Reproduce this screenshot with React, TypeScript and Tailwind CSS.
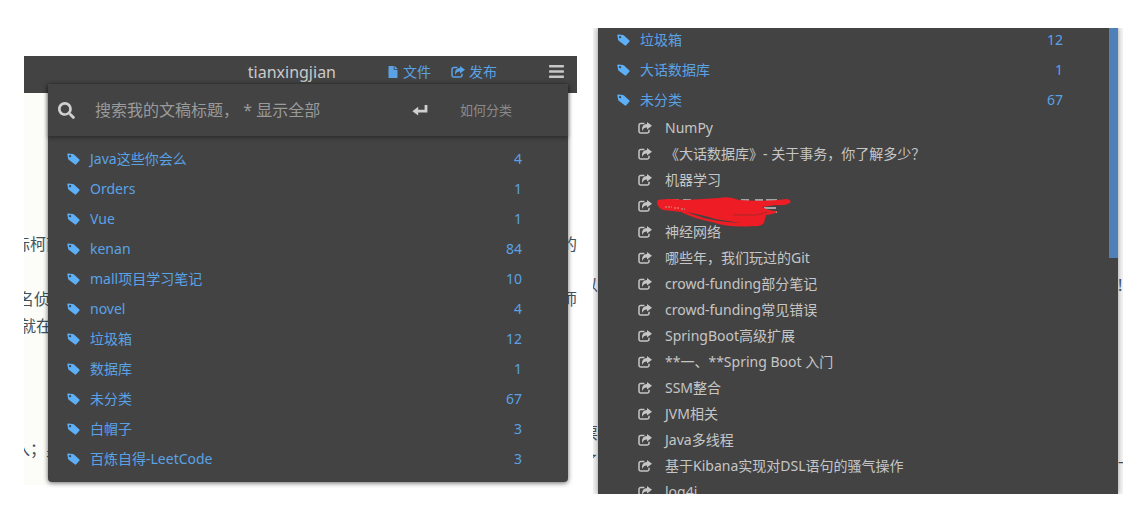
import { FaBars, FaFile, FaSearch } from "react-icons/fa";

const folders = [
  { name: "Java这些你会么", count: 4 },
  { name: "Orders", count: 1 },
  { name: "Vue", count: 1 },
  { name: "kenan", count: 84 },
  { name: "mall项目学习笔记", count: 10 },
  { name: "novel", count: 4 },
  { name: "垃圾箱", count: 12 },
  { name: "数据库", count: 1 },
  { name: "未分类", count: 67 },
  { name: "白帽子", count: 3 },
  { name: "百炼自得-LeetCode", count: 3 },
];

const expanded = [
  { name: "垃圾箱", count: 12 },
  { name: "大话数据库", count: 1 },
  { name: "未分类", count: 67 },
];

const articles = [
  "NumPy",
  "《大话数据库》- 关于事务，你了解多少？",
  "机器学习",
  "",
  "神经网络",
  "哪些年，我们玩过的Git",
  "crowd-funding部分笔记",
  "crowd-funding常见错误",
  "SpringBoot高级扩展",
  "**一、**Spring Boot 入门",
  "SSM整合",
  "JVM相关",
  "Java多线程",
  "基于Kibana实现对DSL语句的骚气操作",
  "log4j",
];

function TagIcon({ className }: { className?: string }) {
  return (
    <svg viewBox="0 0 13 12" className={className} aria-hidden="true">
      <path
        fillRule="evenodd"
        d="M.3 1.300Q.3.5 1.100.5L5.800.9Q6.500 1 7 1.400L12.400 6.400Q13 7 12.500 7.600L9.200 11.300Q8.600 11.900 8 11.400L1.700 6.800Q1.200 6.400 1.100 5.800zM3.100 2.100a1.100 1.100 0 1 0 0 2.200 1.100 1.100 0 0 0 0-2.200z"
        fill="currentColor"
      />
    </svg>
  );
}

function ShareIcon({ className }: { className?: string }) {
  return (
    <svg viewBox="0 0 14 12" className={className} fill="none" aria-hidden="true">
      <path
        d="M6.400 1.500H2.800A1.800 1.800 0 0 0 1 3.300v5.900A1.800 1.800 0 0 0 2.800 11h6.400A1.800 1.800 0 0 0 11 9.200V7.800"
        stroke="currentColor"
        strokeWidth="1.500"
      />
      <path d="M9 0 14 3.800 9 7.600V5.500C6.800 5.300 5.300 6.300 4.300 8.900 3.300 4.800 5.600 2.200 9 2.100z" fill="currentColor" />
    </svg>
  );
}

function ReturnIcon({ className }: { className?: string }) {
  return (
    <svg viewBox="0 0 16 12" className={className} fill="currentColor" aria-hidden="true">
      <path d="M12.600 1h2.800v7.600H6.200V11.600L.4 7.200 6.200 2.800v3h6.400z" />
    </svg>
  );
}

// Red marker strokes hiding a title
function Scribble() {
  return (
    <svg viewBox="0 0 134 42" className="-ml-2 h-[42px] w-[134px] shrink-0" role="img" aria-label="hidden title">
      <path d="M10 15h12m4 0h8M84 15h8M98 15h8m3 0h11M97 18h23M107 23h12m-11 4h12" stroke="#c6c6c6" strokeWidth="1.500" />
      <path
        d="M1 15Q12 13 28 15 48 14 62 13 72 11 82 15 106 17 130 14 135 15 133 18 128 21 119 20L105 22Q112 26 120 26 119 29 109 30L107 38Q103 42 96 41 72 43 55 37 38 34 24 27L6 25Q0 22 0 17z"
        fill="#ee1c24"
      />
      <path d="M29 27Q46 30 58 34 70 36 84 38 62 37 47 33z" fill="#434343" />
      <path d="M76 30h24l10-3" stroke="#a8282c" strokeWidth="1" fill="none" />
      <path d="M8 22h7m2 1h5m2 1h4" stroke="#c6a090" strokeWidth="1" strokeDasharray="2 1" />
    </svg>
  );
}

function FolderRow({ name, count }: { name: string; count: number }) {
  return (
    <li>
      <button type="button" className="flex h-[30px] w-full items-center pr-[46px] pl-[19px] text-left text-[#5aa2e6]">
        <TagIcon className="mr-2.5 h-3 w-[13px] text-[#5db0f8]" />
        <span className="flex-1">{name}</span>
        <span>{count}</span>
      </button>
    </li>
  );
}

function SearchPanel() {
  return (
    <div className="absolute inset-x-0 top-7 mr-[9px] ml-6 rounded-b bg-[#434343] pb-2 shadow-[0_1px_5px_rgba(0,0,0,0.6)]">
      <form className="flex h-[52px] items-center pr-14 pl-2.5 text-[#9a9a9a] shadow-[0_2px_4px_rgba(0,0,0,0.35)]">
        <FaSearch className="size-[17px] text-[#cfcfcf]" />
        <input
          type="text"
          aria-label="搜索"
          placeholder="搜索我的文稿标题， * 显示全部"
          className="ml-5 min-w-0 flex-1 text-base outline-none placeholder:text-[#9a9a9a]"
        />
        <button type="submit" aria-label="Enter" className="text-[#d0d0d0]">
          <ReturnIcon className="h-3 w-4" />
        </button>
        <a href="#sort" className="ml-8 text-[13px] text-[#8a8a8a]">如何分类</a>
      </form>
      <ul className="pt-2">
        {folders.map((f) => (
          <FolderRow key={f.name} {...f} />
        ))}
      </ul>
    </div>
  );
}

function EditorWindow() {
  return (
    <section className="relative mt-14 min-w-0 flex-[553]">
      <header className="flex h-[37px] items-center justify-end bg-[#434343] pr-3 pb-1.5 text-sm text-[#5aa2e6]">
        <h1 className="mr-[51px] text-base text-[#cacaca]">tianxingjian</h1>
        <button type="button" className="mr-5 flex items-center gap-1">
          <FaFile className="size-3" />
          文件
        </button>
        <button type="button" className="mr-[51px] flex items-center gap-1">
          <ShareIcon className="h-3 w-3.5" />
          发布
        </button>
        <button type="button" aria-label="Menu" className="text-[#c8c8c8]">
          <FaBars className="size-[17px]" />
        </button>
      </header>
      <div className="flex justify-between text-base text-[#41525e]">
        <div className="w-7 overflow-hidden bg-[#fcfcf8] pt-[138px] pb-[22px] leading-[27px] whitespace-nowrap">
          <p className="-indent-2.5">际柯南</p>
          <p className="mt-7 -indent-1.5">名侦探</p>
          <p className="-indent-1">就在</p>
          <p className="mt-24 -indent-2.5">入；身</p>
        </div>
        <div className="w-3 overflow-hidden pt-[138px] leading-[27px]">
          <p className="-indent-1">的</p>
          <p className="mt-7 -indent-1">师</p>
        </div>
      </div>
      <SearchPanel />
    </section>
  );
}

function ArticleWindow() {
  return (
    <section className="mt-7 flex h-[466px] min-w-0 flex-[530] overflow-hidden">
      <div className="flex w-[5px] flex-col items-end overflow-hidden bg-[#f1f1f1] pt-[243px] text-base leading-7 text-[#41525e]">
        <p>以</p>
        <p>、</p>
        <p className="mt-[92px]">票</p>
        <p>了</p>
      </div>
      <div className="z-10 flex min-w-0 flex-1 overflow-hidden bg-[#434343] shadow-[0_0_5px_rgba(0,0,0,0.4)]">
        <div className="min-w-0 flex-1">
          <ul className="-mt-[3px]">
            {expanded.map((f) => (
              <FolderRow key={f.name} {...f} />
            ))}
          </ul>
          <ul>
            {articles.map((title, i) => (
              <li key={i}>
                <a href="#article" className="flex h-[26px] items-center pl-10 text-[#c6c6c6]">
                  <ShareIcon className="mr-[13px] h-3 w-3.5 shrink-0" />
                  {title || <Scribble />}
                </a>
              </li>
            ))}
          </ul>
        </div>
        <div className="h-[230px] w-[9px] bg-[#4f81b8]" />
      </div>
      <div className="flex w-[5px] flex-col overflow-hidden bg-[#f4f4f4] pt-[243px] text-base leading-7 text-[#41525e]">
        <p>!</p>
        <p className="mt-[148px]">—</p>
      </div>
    </section>
  );
}

export default function App() {
  return (
    <main className="flex min-h-screen items-start gap-4 bg-white pr-[17px] pl-6 font-['Noto_Sans','Noto_Sans_CJK_SC',sans-serif] text-sm">
      <EditorWindow />
      <ArticleWindow />
    </main>
  );
}
